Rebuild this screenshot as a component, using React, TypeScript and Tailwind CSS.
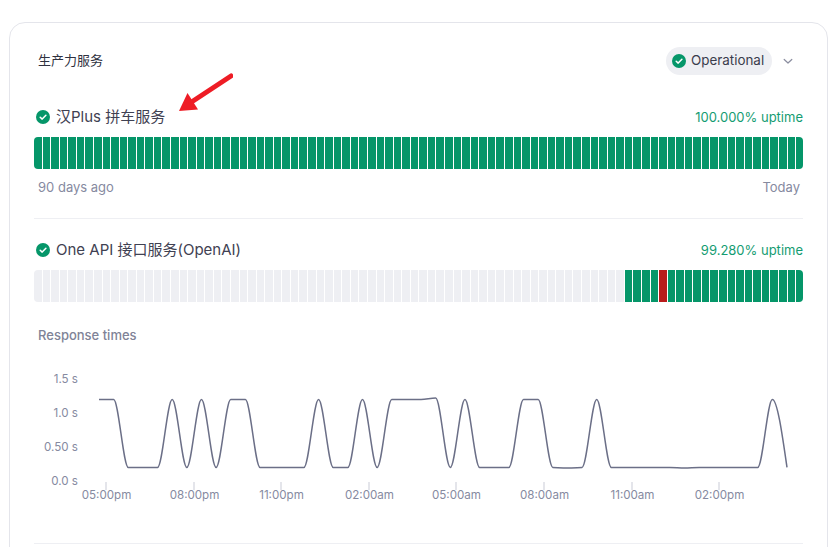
const GREEN = 'bg-[#059669]';

// response time samples, one every 30 minutes (seconds)
const samples = [
  1.2, 1.2, 0.2, 0.2, 0.2, 1.2, 0.2, 1.2, 0.2, 1.2, 1.2, 0.2, 0.2, 0.2, 0.2, 1.2,
  0.2, 0.2, 1.2, 0.2, 1.2, 1.2, 1.2, 1.22, 0.2, 1.2, 0.2, 0.2, 0.2, 1.2, 1.2, 0.2,
  0.19, 0.2, 1.2, 0.2, 0.2, 0.2, 0.2, 0.2, 0.19, 0.2, 0.2, 0.2, 0.2, 0.2, 1.2, 0.2,
];

const xTicks = [
  { x: 106, label: '05:00pm' },
  { x: 194, label: '08:00pm' },
  { x: 281, label: '11:00pm' },
  { x: 369, label: '02:00am' },
  { x: 456, label: '05:00am' },
  { x: 544, label: '08:00am' },
  { x: 632, label: '11:00am' },
  { x: 719, label: '02:00pm' },
];

const yTicks = [
  { y: 379, label: '1.5 s' },
  { y: 413, label: '1.0 s' },
  { y: 447, label: '0.50 s' },
  { y: 481, label: '0.0 s' },
];

// monotone-x curve, same shape the chart library draws
function buildPath() {
  const pts = samples.map((v, i) => [99 + (i * 688) / 47, 481 - v * 68]);
  const slope = (a: number[], b: number[]) => (b[1] - a[1]) / (b[0] - a[0]);
  const t = pts.map((p, i) => {
    if (i === 0 || i === pts.length - 1) return 0;
    const s0 = slope(pts[i - 1], p);
    const s1 = slope(p, pts[i + 1]);
    if (s0 * s1 <= 0) return 0;
    return Math.sign(s0) * Math.min(Math.abs(s0), Math.abs(s1));
  });
  t[0] = (3 * slope(pts[0], pts[1]) - t[1]) / 2;
  t[pts.length - 1] = (3 * slope(pts[pts.length - 2], pts[pts.length - 1]) - t[pts.length - 2]) / 2;
  let d = `M${pts[0][0]},${pts[0][1]}`;
  for (let i = 1; i < pts.length; i++) {
    const h = (pts[i][0] - pts[i - 1][0]) / 3;
    d += `C${pts[i - 1][0] + h},${pts[i - 1][1] + t[i - 1] * h} ${pts[i][0] - h},${pts[i][1] - t[i] * h} ${pts[i][0]},${pts[i][1]}`;
  }
  return d;
}

function CheckIcon() {
  return (
    <svg width="14" height="14" viewBox="0 0 14 14" className="shrink-0">
      <circle cx="7" cy="7" r="7" fill="#059669" />
      <path d="M4.2 7.2 L6.2 9.1 L9.9 5.2" fill="none" stroke="#fff" strokeWidth="1.5" strokeLinecap="round" strokeLinejoin="round" />
    </svg>
  );
}

function UptimeBar({ colors }: { colors: string[] }) {
  return (
    <div className="flex h-8 gap-px overflow-hidden rounded">
      {colors.map((c, i) => (
        <div key={i} className={`flex-1 ${c}`} />
      ))}
    </div>
  );
}

function ServiceHeader({ name, uptime }: { name: string; uptime: string }) {
  return (
    <div className="flex h-5 items-center justify-between">
      <div className="flex items-center gap-[6px] pl-[2px] text-[15px] text-[#3f4152]">
        <CheckIcon />
        <span>{name}</span>
      </div>
      <span className="pt-[2px] text-[13px] font-normal text-[#149c72]">{uptime}</span>
    </div>
  );
}

const allGreen = Array.from({ length: 90 }, () => GREEN);
const partial = Array.from({ length: 90 }, (_, i) =>
  i < 69 ? 'bg-[#eeeff3]' : i === 73 ? 'bg-[#b91c1c]' : GREEN,
);

export default function App() {
  return (
    <div
      className="h-[547px] overflow-hidden bg-white px-[9px] pt-[22px]"
      style={{ fontFamily: 'Inter, "Noto Sans CJK SC", sans-serif' }}
    >
      <div className="relative h-[600px] rounded-2xl border border-[#e4e5eb] px-6">
        {/* annotation arrow */}
        <svg className="absolute left-[159px] top-[43px]" width="64" height="50" viewBox="0 0 64 50">
          <path d="M62 10 L21 37" stroke="#ee1c25" strokeWidth="5" strokeLinecap="round" />
          <path d="M10 45 L29 43.5 L18.5 27 Z" fill="#ee1c25" />
        </svg>

        {/* group header */}
        <div className="mt-6 flex h-7 items-center justify-between pl-1">
          <span className="text-[13px] text-[#2f3140]">生产力服务</span>
          <div className="flex items-center">
            <div className="flex h-7 w-[106px] items-center gap-[5px] rounded-full bg-[#eeeff3] pl-[6px] text-[13.4px] text-[#3a3c4c]">
              <CheckIcon />
              <span className="pb-px">Operational</span>
            </div>
            <svg width="12" height="12" viewBox="0 0 12 12" className="ml-[10px] mr-[9px]">
              <path d="M2.2 4.5 L6 8 L9.8 4.5" fill="none" stroke="#8a8d9f" strokeWidth="1.2" strokeLinecap="round" strokeLinejoin="round" />
            </svg>
          </div>
        </div>

        {/* first service */}
        <div className="mt-[32px]">
          <ServiceHeader name="汉Plus 拼车服务" uptime="100.000% uptime" />
          <div className="mt-[10px]">
            <UptimeBar colors={allGreen} />
          </div>
          <div className="mt-[11px] flex h-[16px] items-center justify-between pl-1 pr-[3px] text-[13px] text-[#868a9f]">
            <span>90 days ago</span>
            <span>Today</span>
          </div>
        </div>

        <div className="mt-[22px] h-px bg-[#eeeff3]" />

        {/* second service */}
        <div className="mt-[21px]">
          <ServiceHeader name="One API 接口服务(OpenAI)" uptime="99.280% uptime" />
          <div className="mt-[10px]">
            <UptimeBar colors={partial} />
          </div>
        </div>

        <div className="mt-[24px] h-[18px] pl-1 text-[13px] font-medium leading-[18px] text-[#7f8397]">Response times</div>

        <svg width="769" height="170" viewBox="34 355 769 170" className="mt-[11px] block">
          {yTicks.map((t) => (
            <text key={t.label} x="78" y={t.y + 4} textAnchor="end" fontSize="11.6" fill="#868a9f">
              {t.label}
            </text>
          ))}
          {xTicks.map((t) => (
            <g key={t.label}>
              <line x1={t.x} x2={t.x} y1="482" y2="490" stroke="#c9cbd6" strokeWidth="1" />
              <text x={t.x + 0.5} y="499" textAnchor="middle" fontSize="11.6" fill="#868a9f">
                {t.label}
              </text>
            </g>
          ))}
          <path d={buildPath()} fill="none" stroke="#6b6f87" strokeWidth="1.5" />
        </svg>

        <div className="mt-[18px] h-px bg-[#eeeff3]" />
      </div>
    </div>
  );
}
